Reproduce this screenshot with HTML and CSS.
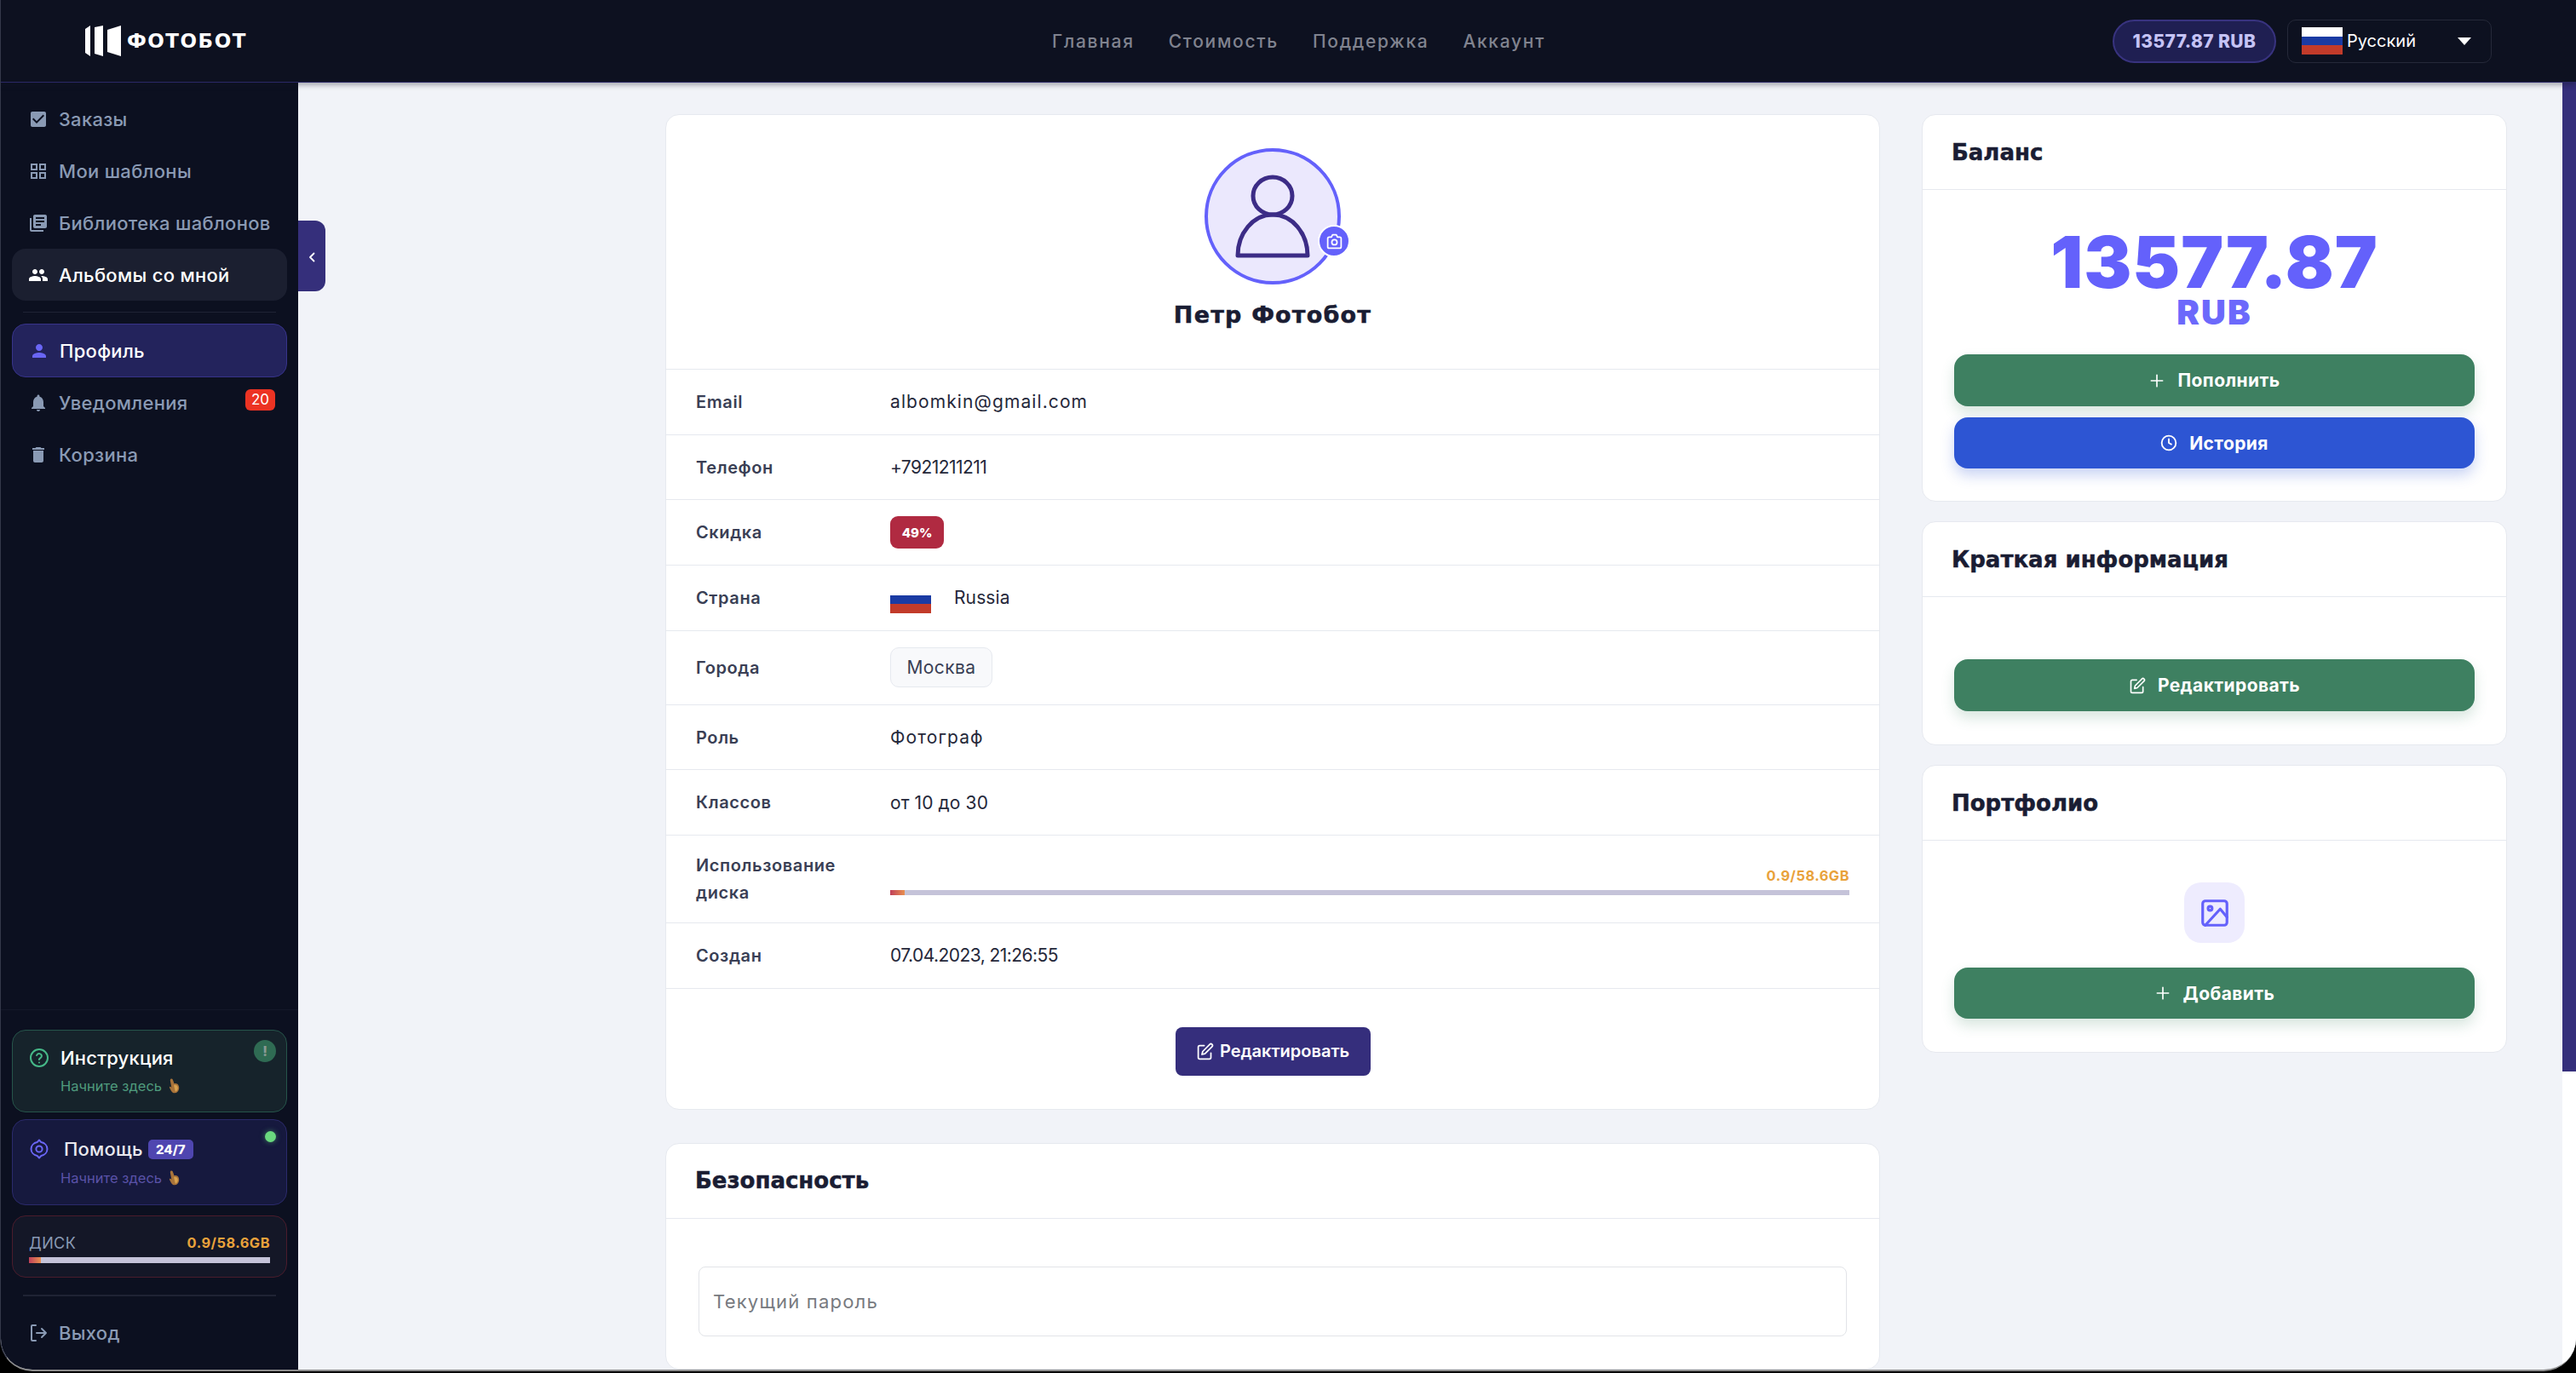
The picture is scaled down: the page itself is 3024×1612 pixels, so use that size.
FILE: index.html
```html
<!DOCTYPE html>
<html lang="ru">

<head>
  <meta charset="UTF-8">
  <meta name="viewport" content="width=device-width, initial-scale=1.0">
  <title>Фотобот</title>
  <link rel="stylesheet" href="styles.css">
</head>

<body>
  <svg class="sprite" xmlns="http://www.w3.org/2000/svg">
    <symbol id="i-check" viewBox="0 0 24 24"><path d="M19 3H5c-1.11 0-2 .9-2 2v14c0 1.1.89 2 2 2h14c1.11 0 2-.9 2-2V5c0-1.1-.89-2-2-2zm-9 14l-5-5 1.41-1.41L10 14.17l7.59-7.59L19 8l-9 9z"/></symbol>
    <symbol id="i-grid" viewBox="0 0 24 24"><path d="M3 3h8v8H3V3zm2 2v4h4V5H5zm8-2h8v8h-8V3zm2 2v4h4V5h-4zM3 13h8v8H3v-8zm2 2v4h4v-4H5zm8-2h8v8h-8v-8zm2 2v4h4v-4h-4z"/></symbol>
    <symbol id="i-library" viewBox="0 0 24 24"><path d="M4 6H2v14c0 1.1.9 2 2 2h14v-2H4V6zm16-4H8c-1.1 0-2 .9-2 2v12c0 1.1.9 2 2 2h12c1.1 0 2-.9 2-2V4c0-1.1-.9-2-2-2zm-1 9H9V9h10v2zm-4 4H9v-2h6v2zm4-8H9V5h10v2z"/></symbol>
    <symbol id="i-people" viewBox="0 0 24 24"><path d="M16 11c1.66 0 2.99-1.34 2.99-3S17.66 5 16 5c-1.66 0-3 1.34-3 3s1.34 3 3 3zm-8 0c1.66 0 2.99-1.34 2.99-3S9.66 5 8 5C6.34 5 5 6.34 5 8s1.34 3 3 3zm0 2c-2.33 0-7 1.17-7 3.5V19h14v-2.5c0-2.33-4.67-3.5-7-3.5zm8 0c-.29 0-.62.02-.97.05 1.16.84 1.97 1.97 1.97 3.45V19h6v-2.5c0-2.33-4.67-3.5-7-3.5z"/></symbol>
    <symbol id="i-person" viewBox="0 0 24 24"><path d="M12 12c2.21 0 4-1.79 4-4s-1.79-4-4-4-4 1.79-4 4 1.79 4 4 4zm0 2c-2.67 0-8 1.34-8 4v2h16v-2c0-2.66-5.33-4-8-4z"/></symbol>
    <symbol id="i-bell" viewBox="0 0 24 24"><path d="M12 22c1.1 0 2-.9 2-2h-4c0 1.1.89 2 2 2zm6-6v-5c0-3.07-1.64-5.64-4.5-6.32V4c0-.83-.67-1.5-1.5-1.5s-1.5.67-1.5 1.5v.68C7.63 5.36 6 7.92 6 11v5l-2 2v1h16v-1l-2-2z"/></symbol>
    <symbol id="i-trash" viewBox="0 0 24 24"><path d="M6 19c0 1.1.9 2 2 2h8c1.1 0 2-.9 2-2V7H6v12zM19 4h-3.5l-1-1h-5l-1 1H5v2h14V4z"/></symbol>
    <symbol id="i-logout" viewBox="0 0 24 24"><path fill="none" stroke="currentColor" stroke-width="2" stroke-linecap="round" stroke-linejoin="round" d="M9 21H5a1 1 0 0 1-1-1V4a1 1 0 0 1 1-1h4M16 17l5-5-5-5M21 12H10"/></symbol>
    <symbol id="i-help" viewBox="0 0 24 24"><g fill="none" stroke="currentColor" stroke-width="2" stroke-linecap="round"><circle cx="12" cy="12" r="10"/><path d="M9.1 9a3 3 0 0 1 5.8 1c0 2-3 2.6-3 4"/><path d="M12 17.5h.01"/></g></symbol>
    <symbol id="i-target" viewBox="0 0 24 24"><g fill="none" stroke="currentColor" stroke-width="2" stroke-linejoin="round"><circle cx="12" cy="12" r="3.6"/><path d="M12 1.5l2.4 2.6C18.400 4.900 21.500 8 21.500 12s-3.100 7.100-7.100 7.900L12 22.500l-2.400-2.600C5.600 19.100 2.500 16 2.500 12s3.100-7.100 7.100-7.900z"/></g></symbol>
    <symbol id="i-edit" viewBox="0 0 24 24"><path fill="none" stroke="currentColor" stroke-width="2" stroke-linecap="round" stroke-linejoin="round" d="M11 4H5a2 2 0 0 0-2 2v14a2 2 0 0 0 2 2h13a2 2 0 0 0 2-2v-6M18.500 2.500a2.100 2.100 0 0 1 3 3L12 15l-4 1 1-4z"/></symbol>
    <symbol id="i-plus" viewBox="0 0 24 24"><path fill="none" stroke="currentColor" stroke-width="2" stroke-linecap="round" d="M12 4v16M4 12h16"/></symbol>
    <symbol id="i-clock" viewBox="0 0 24 24"><g fill="none" stroke="currentColor" stroke-width="2.200" stroke-linecap="round" stroke-linejoin="round"><circle cx="12" cy="12" r="10"/><path d="M12 6.500V12l3.500 2"/></g></symbol>
    <symbol id="i-camera" viewBox="0 0 24 24"><g fill="none" stroke="currentColor" stroke-width="2" stroke-linejoin="round"><path d="M3 8a2 2 0 0 1 2-2h3l1.500-3h5L16 6h3a2 2 0 0 1 2 2v11a2 2 0 0 1-2 2H5a2 2 0 0 1-2-2z"/><circle cx="12" cy="13" r="3.500"/></g></symbol>
    <symbol id="i-image" viewBox="0 0 24 24"><g fill="none" stroke="currentColor" stroke-width="2" stroke-linecap="round" stroke-linejoin="round"><rect x="3" y="3" width="18" height="18" rx="2"/><circle cx="8.500" cy="8.500" r="1.500"/><path d="M21 15l-5-6L5 21"/></g></symbol>
    <symbol id="i-hand" viewBox="0 0 16 20"><path fill="#a8733a" d="M3.600 1.300c.9-.8 2.200-.4 2.600.7l1.800 5c1.500-.5 3.100-.2 4.100.6 1.600 1.300 2.400 3.900 1.800 6.300-.6 2.700-2.600 5-5.200 5-2.400 0-3.700-1.300-4.800-3.400L2.100 12c-.4-.8.600-1.700 1.500-1l1 .9L3 3.300c-.1-.8.100-1.500.6-2z"/><path fill="#d9a24f" d="M7.500 9c1.400-.5 3.200-.1 4.100.8 1 1.100 1.200 3.100.6 4.800-.5 1.300-1.500 2.300-2.800 2.400-.6-2.800-1.400-5.400-1.900-8z"/></symbol>
  </svg>

  <div class="window">
    <header class="topbar">
      <a class="logo">
        <svg class="logo-mark" viewBox="0 0 42 36">
          <polygon points="0,4 6,0 6,36 0,32" />
          <polygon points="11,2 21,0 21,36 11,33" />
          <polygon points="26,5 42,0 42,36 26,31" />
        </svg>
        <span class="logo-text">ФОТОБОТ</span>
      </a>
      <nav class="topnav">
        <a>Главная</a>
        <a>Стоимость</a>
        <a>Поддержка</a>
        <a>Аккаунт</a>
      </nav>
      <div class="topbar-right">
        <div class="balance-pill">13577.87 RUB</div>
        <div class="lang">
          <span class="flag flag-lang"></span>
          <span class="lang-name">Русский</span>
          <span class="caret"></span>
        </div>
      </div>
    </header>

    <div class="layout">
      <aside class="sidebar">
        <nav class="side-nav">
          <a class="side-item"><svg class="side-icon"><use href="#i-check" /></svg>Заказы</a>
          <a class="side-item"><svg class="side-icon"><use href="#i-grid" /></svg>Мои шаблоны</a>
          <a class="side-item"><svg class="side-icon"><use href="#i-library" /></svg>Библиотека шаблонов</a>
          <a class="side-item hover"><svg class="side-icon"><use href="#i-people" /></svg>Альбомы со мной</a>
          <div class="side-divider"></div>
          <a class="side-item active"><svg class="side-icon"><use href="#i-person" /></svg>Профиль</a>
          <a class="side-item"><svg class="side-icon"><use href="#i-bell" /></svg>Уведомления<span class="count">20</span></a>
          <a class="side-item"><svg class="side-icon"><use href="#i-trash" /></svg>Корзина</a>
        </nav>

        <div class="side-footer">
          <div class="promo promo-green">
            <div class="promo-title"><svg class="promo-icon"><use href="#i-help" /></svg>Инструкция</div>
            <div class="promo-sub">Начните здесь <svg class="hand"><use href="#i-hand" /></svg></div>
            <span class="promo-alert">!</span>
          </div>
          <div class="promo promo-blue">
            <div class="promo-title"><svg class="promo-icon"><use href="#i-target" /></svg><span class="promo-name">Помощь</span><span class="chip-247">24/7</span></div>
            <div class="promo-sub">Начните здесь <svg class="hand"><use href="#i-hand" /></svg></div>
            <span class="online-dot"></span>
          </div>
          <div class="disk-box">
            <div class="disk-head"><span class="disk-name">ДИСК</span><span class="disk-value">0.9/58.6GB</span></div>
            <div class="bar bar-side"><span class="bar-fill" style="width: 1.5%"></span></div>
          </div>
          <div class="side-divider side-divider-low"></div>
          <a class="side-item"><svg class="side-icon"><use href="#i-logout" /></svg>Выход</a>
        </div>
      </aside>

      <main class="content">
        <button class="collapse">
          <svg viewBox="0 0 8 12"><path d="M6.500 1.500L2 6l4.500 4.500" fill="none" stroke="currentColor" stroke-width="1.800" stroke-linecap="round" stroke-linejoin="round" /></svg>
        </button>

        <div class="columns">
          <div class="col-left">
            <section class="card">
              <div class="profile-head">
                <div class="avatar">
                  <svg class="avatar-user" viewBox="0 0 88 98">
                    <g fill="none" stroke="#3c2c86" stroke-width="5" stroke-linejoin="round">
                      <ellipse cx="44" cy="25" rx="23" ry="22" />
                      <path d="M3 95c0-26 18-48 41-48s41 22 41 48z" />
                    </g>
                  </svg>
                  <span class="avatar-camera"><svg><use href="#i-camera" /></svg></span>
                </div>
                <h2 class="profile-name">Петр Фотобот</h2>
              </div>

              <div class="info-row"><span class="info-label">Email</span><span class="info-value val-email">albomkin@gmail.com</span></div>
              <div class="info-row"><span class="info-label">Телефон</span><span class="info-value val-num">+7921211211</span></div>
              <div class="info-row"><span class="info-label">Скидка</span><span class="discount">49%</span></div>
              <div class="info-row"><span class="info-label">Страна</span><span class="info-value country"><span class="flag flag-row"></span>Russia</span></div>
              <div class="info-row info-row-city"><span class="info-label">Города</span><span class="city">Москва</span></div>
              <div class="info-row"><span class="info-label">Роль</span><span class="info-value val-role">Фотограф</span></div>
              <div class="info-row"><span class="info-label">Классов</span><span class="info-value">от 10 до 30</span></div>
              <div class="info-row info-row-disk">
                <span class="info-label">Использование диска</span>
                <div class="disk-usage">
                  <div class="disk-value">0.9/58.6GB</div>
                  <div class="bar"><span class="bar-fill" style="width: 1.5%"></span></div>
                </div>
              </div>
              <div class="info-row"><span class="info-label">Создан</span><span class="info-value val-num">07.04.2023, 21:26:55</span></div>

              <div class="profile-actions">
                <a class="btn-edit"><svg><use href="#i-edit" /></svg>Редактировать</a>
              </div>
            </section>

            <section class="card">
              <h3 class="card-title">Безопасность</h3>
              <div class="security-body">
                <input class="field" type="password" placeholder="Текущий пароль">
              </div>
            </section>
          </div>

          <div class="col-right">
            <section class="card">
              <h3 class="card-title">Баланс</h3>
              <div class="side-body balance-body">
                <div class="balance-num">13577.87</div>
                <div class="balance-cur">RUB</div>
                <div class="btn-stack">
                  <a class="btn btn-green"><svg><use href="#i-plus" /></svg>Пополнить</a>
                  <a class="btn btn-blue"><svg><use href="#i-clock" /></svg>История</a>
                </div>
              </div>
            </section>

            <section class="card">
              <h3 class="card-title">Краткая информация</h3>
              <div class="side-body brief-body">
                <a class="btn btn-green"><svg><use href="#i-edit" /></svg>Редактировать</a>
              </div>
            </section>

            <section class="card">
              <h3 class="card-title">Портфолио</h3>
              <div class="side-body portfolio-body">
                <span class="portfolio-icon"><svg><use href="#i-image" /></svg></span>
                <a class="btn btn-green"><svg><use href="#i-plus" /></svg>Добавить</a>
              </div>
            </section>
          </div>
        </div>
      </main>

      <div class="scrollbar"><div class="scroll-thumb"></div></div>
    </div>
  </div>
</body>

</html>
```

FILE: styles.css
```css
* {
  box-sizing: border-box;
  margin: 0;
  padding: 0;
}

html,
body {
  width: 100%;
  height: 100%;
  overflow: hidden;
  background: #000;
}

body {
  font-family: 'Inter', 'Noto Sans', sans-serif;
  color: #25283a;
}

.sprite {
  display: none;
}

.window {
  height: 1610px;
  display: flex;
  flex-direction: column;
  overflow: hidden;
  background: #f1f3f8;
  border-bottom: 2px solid #8d8d8d;
  border-left: 1px solid #34384a;
  border-radius: 0 0 38px 38px;
}

/* top bar */
.topbar {
  flex: 0 0 97px;
  display: grid;
  grid-template-columns: 1fr auto 1fr;
  align-items: center;
  padding: 0 99px 0 99px;
  background: #0d1120;
  border-bottom: 1px solid #2b2866;
  box-shadow: 0 3px 6px rgba(20, 24, 40, 0.35);
  position: relative;
  z-index: 3;
}

.logo {
  display: flex;
  align-items: center;
  gap: 7px;
}

.logo-mark {
  width: 42px;
  height: 36px;
  fill: #fff;
}

.logo-text {
  color: #fff;
  font-family: 'DejaVu Sans', sans-serif;
  font-weight: 700;
  font-size: 23px;
  letter-spacing: 1.5px;
}

.topnav {
  display: flex;
  gap: 40px;
  margin-left: 24px;
}

.topnav a {
  color: #80838f;
  font-size: 21px;
  font-weight: 500;
  letter-spacing: 1.7px;
}

.topbar-right {
  display: flex;
  justify-content: flex-end;
  gap: 13px;
}

.balance-pill {
  width: 192px;
  height: 51px;
  display: flex;
  align-items: center;
  justify-content: center;
  background: #1f1f52;
  border: 2px solid #38337f;
  border-radius: 26px;
  color: #c5c3f5;
  font-weight: 800;
  font-size: 21px;
  letter-spacing: 0.4px;
}

.lang {
  width: 240px;
  height: 51px;
  display: flex;
  align-items: center;
  padding: 0 23px 0 16px;
  border: 1px solid #252939;
  border-radius: 10px;
  color: #fff;
  font-size: 20px;
}

.flag {
  display: block;
  background: linear-gradient(#fff 0 33%, #1a3ba3 33% 66%, #c23b2a 66%);
}

.flag-lang {
  width: 48px;
  height: 32px;
  margin-right: 5px;
}

.lang-name {
  flex: 1;
}

.caret {
  width: 0;
  height: 0;
  border-left: 8px solid transparent;
  border-right: 8px solid transparent;
  border-top: 9px solid #fff;
}

/* layout */
.layout {
  flex: 1;
  display: flex;
  min-height: 0;
}

.sidebar {
  flex: 0 0 349px;
  display: flex;
  flex-direction: column;
  background: #0c1020;
  padding-bottom: 13px;
}

.side-nav {
  padding: 12px 13px 0;
}

.side-item {
  height: 61px;
  display: flex;
  align-items: center;
  padding-left: 19px;
  border-radius: 16px;
  color: #8a9ab4;
  font-size: 22px;
  font-weight: 500;
  letter-spacing: 0.3px;
}

.side-icon {
  width: 24px;
  height: 24px;
  margin-right: 12px;
  fill: currentColor;
  flex: none;
}

.side-item.hover {
  background: #1b1f30;
  color: #fff;
}

.side-item.active {
  height: 63px;
  margin-bottom: -1px;
  background: #23235c;
  border: 1px solid #37338a;
  color: #fff;
}

.side-item.active .side-icon {
  color: #6a66f5;
}

.side-divider {
  height: 1px;
  margin: 13px 13px 13px;
  background: #1f2334;
}

.count {
  margin-left: auto;
  margin-right: 14px;
  width: 35px;
  height: 25px;
  margin-top: -7px;
  display: flex;
  align-items: center;
  justify-content: center;
  background: #ec3323;
  border-radius: 6px;
  color: #fff;
  font-size: 17px;
  font-weight: 400;
  letter-spacing: 0;
}

.side-footer {
  margin-top: auto;
  padding: 23px 13px 0;
  border-top: 1px solid #141829;
}

.promo {
  position: relative;
  padding: 18px 0 0 19px;
  border-radius: 16px;
  border: 1px solid;
}

.promo-green {
  height: 97px;
  background: #16232b;
  border-color: #26544a;
}

.promo-blue {
  height: 101px;
  margin-top: 8px;
  padding-top: 20px;
  background: #16193e;
  border-color: #2b2a6b;
}

.promo-title {
  display: flex;
  align-items: center;
  height: 28px;
  color: #fff;
  font-size: 22px;
  font-weight: 500;
  letter-spacing: 0.2px;
}

.promo-icon {
  width: 24px;
  height: 24px;
  margin-right: 13px;
  flex: none;
}

.promo-green .promo-icon {
  color: #46b888;
}

.promo-blue .promo-icon {
  color: #6a66f5;
}

.promo-name {
  margin-left: 4px;
  color: #e8e8ee;
}

.chip-247 {
  margin-left: 6px;
  width: 53px;
  height: 23px;
  display: flex;
  align-items: center;
  justify-content: center;
  background: #4f46b0;
  border-radius: 5px;
  color: #fff;
  font-size: 15px;
  font-weight: 800;
  letter-spacing: 0;
}

.promo-sub {
  margin: 9px 0 0 37px;
  display: flex;
  align-items: center;
  gap: 7px;
  font-size: 16.500px;
  letter-spacing: 0;
}

.promo-blue .promo-sub {
  margin-top: 10px;
}

.promo-green .promo-sub {
  color: #4f9b7d;
}

.promo-blue .promo-sub {
  color: #5a52a8;
}

.hand {
  width: 15px;
  height: 20px;
}

.promo-alert {
  position: absolute;
  top: 11px;
  right: 12px;
  width: 26px;
  height: 26px;
  display: flex;
  align-items: center;
  justify-content: center;
  border-radius: 50%;
  background: #2f6b53;
  color: #8a9a94;
  font-size: 16px;
  font-weight: 800;
}

.online-dot {
  position: absolute;
  top: 13px;
  right: 12px;
  width: 13px;
  height: 13px;
  border-radius: 50%;
  background: #6ad97f;
  box-shadow: 0 0 6px rgba(106, 217, 127, 0.5);
}

.disk-box {
  height: 73px;
  margin-top: 12px;
  padding: 20px 19px 0;
  background: #141727;
  border: 1px solid #4a1c2c;
  border-radius: 16px;
}

.disk-head {
  display: flex;
  justify-content: space-between;
  align-items: center;
  height: 22px;
  margin-bottom: 6px;
}

.disk-name {
  color: #8a9ab4;
  font-size: 18px;
  letter-spacing: 0.4px;
}

.disk-value {
  color: #e9a23b;
  font-size: 16.400px;
  font-weight: 700;
  letter-spacing: 0.5px;
  text-align: right;
}

.bar {
  height: 6px;
  background: #c5c3d9;
}

.bar-side {
  height: 7px;
}

.bar-fill {
  display: block;
  height: 100%;
  min-width: 14px;
  background: linear-gradient(90deg, #c0405a, #e89050);
}

.side-divider-low {
  margin: 20px 13px 12px;
  height: 2px;
}

/* content */
.content {
  flex: 1;
  position: relative;
  min-width: 0;
  overflow: hidden;
}

.collapse {
  position: absolute;
  left: 0;
  top: 162px;
  width: 32px;
  height: 83px;
  display: flex;
  align-items: center;
  justify-content: center;
  background: #352f7b;
  border: 0;
  border-radius: 0 12px 12px 0;
  color: #fff;
}

.collapse svg {
  width: 8px;
  height: 12px;
  margin-top: 3px;
}

.columns {
  display: grid;
  grid-template-columns: 1426px 687px;
  column-gap: 49px;
  padding: 37px 0 0 431px;
}

.col-left,
.col-right {
  display: flex;
  flex-direction: column;
  gap: 39px;
}

.col-right {
  gap: 23px;
}

.card {
  background: #fff;
  border: 1px solid #e6e9ef;
  border-radius: 16px;
}

.card-title {
  height: 88px;
  display: flex;
  align-items: center;
  padding-left: 34px;
  border-bottom: 1px solid #e6e9ef;
  color: #1a1d33;
  font-family: 'DejaVu Sans', sans-serif;
  font-size: 26px;
  font-weight: 700;
  -webkit-text-stroke: 0.5px currentColor;
}

/* profile card */
.profile-head {
  height: 299px;
  display: flex;
  flex-direction: column;
  align-items: center;
  padding-top: 39px;
  border-bottom: 1px solid #e6e9ef;
}

.avatar {
  position: relative;
  width: 160px;
  height: 160px;
  display: flex;
  align-items: center;
  justify-content: center;
  border: 4px solid #6461fb;
  border-radius: 50%;
  background: #ebe8fd;
}

.avatar-user {
  width: 88px;
  height: 98px;
}

.avatar-camera {
  position: absolute;
  right: -15px;
  bottom: 28px;
  width: 38px;
  height: 38px;
  display: flex;
  align-items: center;
  justify-content: center;
  background: #6461fb;
  border: 2px solid #fff;
  border-radius: 50%;
  color: #fff;
}

.avatar-camera svg {
  width: 21px;
  height: 21px;
}

.profile-name {
  margin-top: 20px;
  color: #1a1d33;
  font-family: 'DejaVu Sans', sans-serif;
  font-size: 27px;
  font-weight: 700;
  letter-spacing: 1.2px;
  -webkit-text-stroke: 0.5px currentColor;
}

.info-row {
  min-height: 76.7px;
  display: grid;
  grid-template-columns: 228px 1fr;
  align-items: center;
  padding: 0 35px;
  border-bottom: 1px solid #e6e9ef;
  font-size: 21px;
}

.info-row-city {
  min-height: 87px;
}

.info-row-disk {
  min-height: 103px;
}

.info-label {
  color: #3a3f55;
  font-size: 20px;
  font-weight: 600;
  line-height: 32px;
  letter-spacing: 0.6px;
  width: 190px;
}

.info-value {
  color: #25283a;
  letter-spacing: 0.1px;
}

.val-email,
.val-role {
  letter-spacing: 1.1px;
}

.val-num {
  letter-spacing: -0.55px;
}

.discount {
  width: 63px;
  height: 38px;
  display: flex;
  align-items: center;
  justify-content: center;
  background: #b02a41;
  border-radius: 9px;
  color: #fff;
  font-size: 15px;
  font-weight: 800;
}

.country {
  display: flex;
  align-items: center;
  gap: 27px;
}

.flag-row {
  width: 48px;
  height: 32px;
  margin-top: 5px;
}

.city {
  width: 120px;
  height: 47px;
  display: flex;
  align-items: center;
  justify-content: center;
  background: #f8f9fb;
  border: 1px solid #e6e9ef;
  border-radius: 10px;
  color: #3a3f55;
  letter-spacing: 0.4px;
}

.disk-usage {
  align-self: start;
  padding-top: 37px;
}

.disk-usage .disk-value {
  margin-bottom: 7px;
  line-height: 20px;
}

.profile-actions {
  height: 141px;
  display: flex;
  justify-content: center;
  padding-top: 45px;
}

.btn-edit {
  width: 229px;
  height: 57px;
  display: flex;
  align-items: center;
  justify-content: center;
  gap: 7px;
  background: #352e7c;
  border-radius: 8px;
  color: #fff;
  font-size: 20px;
  font-weight: 600;
}

.btn-edit svg {
  width: 21px;
  height: 21px;
}

.security-body {
  padding: 56px 38px 38px;
}

.field {
  display: block;
  width: 100%;
  height: 82px;
  padding: 0 16px;
  border: 1px solid #e2e4e8;
  border-radius: 8px;
  background: #fff;
  font-family: inherit;
  font-size: 22px;
  letter-spacing: 1.2px;
}

.field::placeholder {
  color: #777a80;
}

/* right column */
.side-body {
  padding: 0 37px 39px;
}

.balance-body {
  padding-top: 45px;
  padding-bottom: 38px;
  text-align: center;
}

.balance-num {
  color: #6461fb;
  font-size: 84px;
  line-height: 79px;
  font-weight: 900;
  letter-spacing: 1px;
}

.balance-cur {
  color: #6c69fb;
  font-size: 40px;
  line-height: 40px;
  font-weight: 900;
  letter-spacing: 2px;
}

.btn-stack {
  margin-top: 29px;
  display: flex;
  flex-direction: column;
  gap: 13px;
}

.btn-stack .btn-blue {
  height: 60px;
}

.brief-body {
  padding-top: 73px;
}

.portfolio-body {
  padding-top: 49px;
}

.portfolio-body .btn {
  height: 60px;
}

.portfolio-icon {
  display: flex;
  align-items: center;
  justify-content: center;
  width: 71px;
  height: 71px;
  margin: 0 auto 29px;
  background: #eeecfe;
  border-radius: 20px;
  color: #6461fb;
}

.portfolio-icon svg {
  width: 38px;
  height: 38px;
}

.btn {
  height: 61px;
  display: flex;
  align-items: center;
  justify-content: center;
  gap: 14px;
  border-radius: 16px;
  color: #fff;
  font-size: 21px;
  font-weight: 700;
  letter-spacing: 0.4px;
}

.btn svg {
  width: 20px;
  height: 20px;
}

.btn-green {
  background: #3e8061;
  box-shadow: 0 8px 16px rgba(62, 128, 97, 0.2);
}

.btn-blue {
  background: #2d55d3;
  box-shadow: 0 8px 16px rgba(45, 85, 211, 0.25);
}

.scrollbar {
  flex: 0 0 16px;
  background: #fff;
}

.scroll-thumb {
  height: 1161px;
  background: #352f7b;
}
```
